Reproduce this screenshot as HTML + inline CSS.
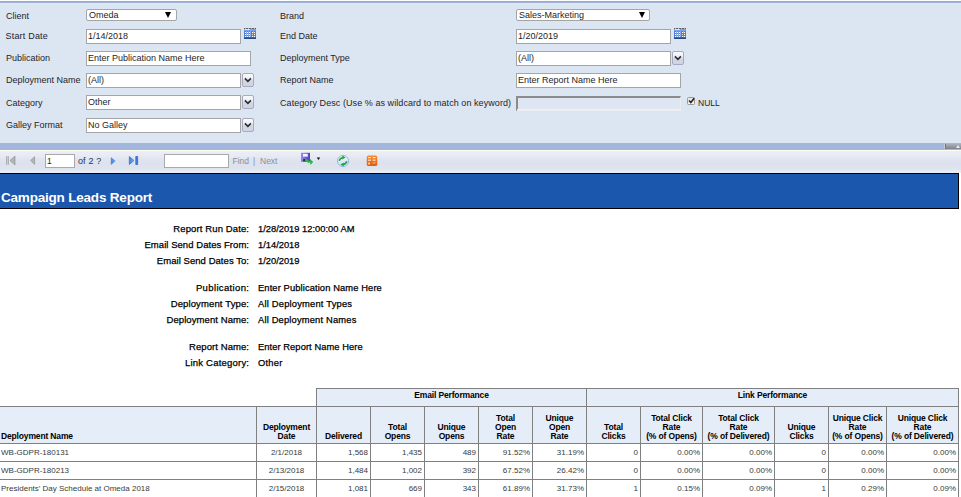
<!DOCTYPE html>
<html><head><meta charset="utf-8">
<style>
html,body{margin:0;padding:0;width:961px;height:497px;overflow:hidden;background:#fff;position:relative}
body{font-family:"Liberation Sans",sans-serif;}
.a{position:absolute}
#params{left:0;top:1px;width:961px;height:142px;background:#dce5f2;border-top:1px solid #aaa8a8;box-sizing:border-box}
#params:before{content:"";position:absolute;left:0;top:0;width:961px;height:1px;background:#9fb3d9;box-shadow:0 1px 0 #e1e9f4}
.lbl{position:absolute;font-size:9px;color:#1e1e2a;white-space:nowrap;line-height:11px}
.box{position:absolute;background:#fff;border:1px solid #a5a5a5;box-sizing:border-box;font-size:9px;color:#1e1e2a;line-height:11px;padding-left:1px;white-space:nowrap;overflow:hidden}
.sel{border-radius:2px;padding-left:2px}
.tri{position:absolute;width:0;height:0;border-left:3px solid transparent;border-right:3px solid transparent;border-top:6px solid #000}
.btn{position:absolute;width:12px;height:14px;box-sizing:border-box;border:1px solid #a7aac0;border-radius:2px;background:linear-gradient(#fbfbfd 0%,#eceef6 40%,#d4d7e6 55%,#cfd3e3 100%)}
.btn svg{position:absolute;left:1.4px;top:3px}
.cal{position:absolute;width:12px;height:11px}
#splitter{left:0;top:143px;width:961px;height:7px;background:#a3b7dd}
#collapse{left:944px;top:144px;width:17px;height:5px;background:linear-gradient(#abb0bb,#7d8491);border-left:1px solid #c3cbd8;box-sizing:border-box}
#toolbar{left:0;top:150px;width:961px;height:23px;background:linear-gradient(to bottom,#fffcf0 0px,#fffcf0 1px,#eceef6 1px,#e8ebf4 6px,#dfe4ef 9px,#dce2ee 14px,#e0e6f0 20px,#e8ecf5 21px,#e8ecf5 23px)}
#hdr{left:0;top:173px;width:959px;height:36px;background:#1c57ae;border:1px solid #000;border-left:none;box-sizing:border-box}
#title{left:1px;top:190px;font-size:13.5px;letter-spacing:-0.2px;font-weight:bold;color:#fff;white-space:nowrap;line-height:16px}
.rl{position:absolute;margin-left:1px;font-size:9.5px;color:#000;-webkit-text-stroke:0.25px #000;white-space:nowrap;line-height:12px;text-align:right;width:200px}
.rv{position:absolute;font-size:9.33px;color:#000;-webkit-text-stroke:0.25px #000;white-space:nowrap;line-height:12px}
table{position:absolute;left:0;top:388px;border-collapse:collapse;table-layout:fixed;font-size:8px}
td{border:1px solid #7f7f7f;padding:0 2px;overflow:hidden;white-space:nowrap;box-sizing:border-box}
td.h{background:#e5edf9;font-weight:bold;color:#000;text-align:center;vertical-align:bottom;line-height:9px;padding-bottom:2px}
td.d{color:#3a3a3a;text-align:right;height:18px}
.th{position:absolute;font-size:8.5px;letter-spacing:-0.15px;font-weight:bold;color:#000;text-align:center;white-space:nowrap;box-sizing:border-box}
.thi{position:absolute;left:0;right:0;bottom:1px;line-height:9px}
.td{position:absolute;font-size:8px;color:#3a3a3a;white-space:nowrap;line-height:17px;height:17px;box-sizing:border-box;overflow:hidden}
</style></head><body>
<div id="params" class="a"></div>

<div class="lbl" style="left:6px;top:10.6px">Client</div>
<div class="lbl" style="left:5.5px;top:31px;letter-spacing:0.2px">Start Date</div>
<div class="lbl" style="left:6px;top:53px">Publication</div>
<div class="lbl" style="left:6px;top:75px">Deployment Name</div>
<div class="lbl" style="left:6px;top:98px">Category</div>
<div class="lbl" style="left:6px;top:120px">Galley Format</div>
<div class="lbl" style="left:280px;top:10.6px">Brand</div>
<div class="lbl" style="left:280px;top:31px">End Date</div>
<div class="lbl" style="left:280px;top:53px">Deployment Type</div>
<div class="lbl" style="left:280px;top:75px">Report Name</div>
<div class="lbl" style="left:280px;top:98px;letter-spacing:0.066px">Category Desc (Use % as wildcard to match on keyword)</div>

<div class="box sel" style="left:86px;top:9px;width:91px;height:12px;line-height:10px">Omeda</div>
<div class="tri" style="left:165px;top:12px"></div>
<div class="box" style="left:86px;top:29px;width:155px;height:15px;line-height:13px">1/14/2018</div>
<svg class="cal" style="left:244px;top:28px" width="12" height="11" viewBox="0 0 12 11" shape-rendering="crispEdges"><rect x="0" y="0" width="12" height="11" fill="#4f80d2"/><rect x="0" y="0" width="12" height="1" fill="#5e5e62"/><rect x="1" y="0" width="1" height="1" fill="#b9b9bd"/><rect x="4" y="0" width="1" height="1" fill="#b9b9bd"/><rect x="7" y="0" width="1" height="1" fill="#b9b9bd"/><rect x="10" y="0" width="1" height="1" fill="#b9b9bd"/><rect x="0" y="1" width="12" height="2" fill="#72a4ee"/><rect x="1" y="1" width="5" height="1" fill="#d8e6fb"/><rect x="2" y="3" width="1" height="6" fill="#86aae6"/><rect x="4" y="3" width="1" height="6" fill="#86aae6"/><rect x="6" y="3" width="1" height="6" fill="#86aae6"/><rect x="9" y="3" width="1" height="6" fill="#86aae6"/><rect x="1" y="4" width="1" height="1" fill="#ffffff"/><rect x="1" y="6" width="1" height="1" fill="#ffffff"/><rect x="1" y="8" width="1" height="1" fill="#ffffff"/><rect x="3" y="4" width="1" height="1" fill="#ffffff"/><rect x="3" y="6" width="1" height="1" fill="#ffffff"/><rect x="3" y="8" width="1" height="1" fill="#ffffff"/><rect x="5" y="4" width="1" height="1" fill="#ffffff"/><rect x="5" y="6" width="1" height="1" fill="#ffffff"/><rect x="5" y="8" width="1" height="1" fill="#ffffff"/><rect x="8" y="4" width="1" height="1" fill="#ffffff"/><rect x="8" y="6" width="1" height="1" fill="#ffffff"/><rect x="8" y="8" width="1" height="1" fill="#ffffff"/><rect x="10" y="4" width="1" height="1" fill="#ffffff"/><rect x="10" y="6" width="1" height="1" fill="#ffffff"/><rect x="10" y="8" width="1" height="1" fill="#ffffff"/><rect x="7" y="5" width="3" height="3" fill="#f0521e"/><rect x="8" y="6" width="1" height="1" fill="#ffd0bc"/><rect x="0" y="9" width="12" height="1" fill="#3a62a8"/><rect x="0" y="10" width="12" height="1" fill="#2a4a86"/></svg>
<div class="box" style="left:86px;top:51px;width:165px;height:15px;line-height:13px">Enter Publication Name Here</div>
<div class="box" style="left:86px;top:73px;width:155px;height:15px;line-height:13px">(All)</div>
<div class="btn" style="left:242px;top:73px"><svg width="8" height="6" viewBox="0 0 8 6"><path d="M0.9 1.4 L3.9 4.3 L6.9 1.4" fill="none" stroke="#2e2e2e" stroke-width="1.7"/></svg></div>
<div class="box" style="left:86px;top:95px;width:155px;height:15px;line-height:13px">Other</div>
<div class="btn" style="left:242px;top:95px"><svg width="8" height="6" viewBox="0 0 8 6"><path d="M0.9 1.4 L3.9 4.3 L6.9 1.4" fill="none" stroke="#2e2e2e" stroke-width="1.7"/></svg></div>
<div class="box" style="left:86px;top:118px;width:155px;height:15px;line-height:13px">No Galley</div>
<div class="btn" style="left:242px;top:118px"><svg width="8" height="6" viewBox="0 0 8 6"><path d="M0.9 1.4 L3.9 4.3 L6.9 1.4" fill="none" stroke="#2e2e2e" stroke-width="1.7"/></svg></div>

<div class="box sel" style="left:516px;top:9px;width:134px;height:12px;line-height:10px">Sales-Marketing</div>
<div class="tri" style="left:639px;top:12px"></div>
<div class="box" style="left:516px;top:29px;width:155px;height:15px;line-height:13px">1/20/2019</div>
<svg class="cal" style="left:674px;top:28px" width="12" height="11" viewBox="0 0 12 11" shape-rendering="crispEdges"><rect x="0" y="0" width="12" height="11" fill="#4f80d2"/><rect x="0" y="0" width="12" height="1" fill="#5e5e62"/><rect x="1" y="0" width="1" height="1" fill="#b9b9bd"/><rect x="4" y="0" width="1" height="1" fill="#b9b9bd"/><rect x="7" y="0" width="1" height="1" fill="#b9b9bd"/><rect x="10" y="0" width="1" height="1" fill="#b9b9bd"/><rect x="0" y="1" width="12" height="2" fill="#72a4ee"/><rect x="1" y="1" width="5" height="1" fill="#d8e6fb"/><rect x="2" y="3" width="1" height="6" fill="#86aae6"/><rect x="4" y="3" width="1" height="6" fill="#86aae6"/><rect x="6" y="3" width="1" height="6" fill="#86aae6"/><rect x="9" y="3" width="1" height="6" fill="#86aae6"/><rect x="1" y="4" width="1" height="1" fill="#ffffff"/><rect x="1" y="6" width="1" height="1" fill="#ffffff"/><rect x="1" y="8" width="1" height="1" fill="#ffffff"/><rect x="3" y="4" width="1" height="1" fill="#ffffff"/><rect x="3" y="6" width="1" height="1" fill="#ffffff"/><rect x="3" y="8" width="1" height="1" fill="#ffffff"/><rect x="5" y="4" width="1" height="1" fill="#ffffff"/><rect x="5" y="6" width="1" height="1" fill="#ffffff"/><rect x="5" y="8" width="1" height="1" fill="#ffffff"/><rect x="8" y="4" width="1" height="1" fill="#ffffff"/><rect x="8" y="6" width="1" height="1" fill="#ffffff"/><rect x="8" y="8" width="1" height="1" fill="#ffffff"/><rect x="10" y="4" width="1" height="1" fill="#ffffff"/><rect x="10" y="6" width="1" height="1" fill="#ffffff"/><rect x="10" y="8" width="1" height="1" fill="#ffffff"/><rect x="7" y="5" width="3" height="3" fill="#f0521e"/><rect x="8" y="6" width="1" height="1" fill="#ffd0bc"/><rect x="0" y="9" width="12" height="1" fill="#3a62a8"/><rect x="0" y="10" width="12" height="1" fill="#2a4a86"/></svg>
<div class="box" style="left:516px;top:51px;width:155px;height:15px;line-height:13px">(All)</div>
<div class="btn" style="left:672px;top:51px"><svg width="8" height="6" viewBox="0 0 8 6"><path d="M0.9 1.4 L3.9 4.3 L6.9 1.4" fill="none" stroke="#2e2e2e" stroke-width="1.7"/></svg></div>
<div class="box" style="left:516px;top:73px;width:165px;height:15px;line-height:13px">Enter Report Name Here</div>
<div class="a" style="left:516px;top:96px;width:165px;height:15px;box-sizing:border-box;border-style:solid;border-width:2px 1px 1px 2px;border-color:#8c8c8c #ececec #ececec #8c8c8c;background:#dde6f2"></div><div class="a" style="left:517px;top:109px;width:164px;height:1px;background:#f0f0f0"></div>
<div class="a" style="left:687px;top:97px;width:8px;height:8px;box-sizing:border-box;background:linear-gradient(#e4e4e4,#f4f4f4);border:1px solid #9a9a9a;border-radius:1.5px"></div><svg class="a" style="left:688px;top:97px" width="7" height="7" viewBox="0 0 7 7"><path d="M1 3.6 L2.8 5.5 L6.2 1.2" fill="none" stroke="#222" stroke-width="1.5"/></svg>
<div class="lbl" style="left:698px;top:98px;font-size:8.5px">NULL</div>

<div id="splitter" class="a"></div>
<div id="collapse" class="a"><div class="a" style="left:0;top:0;width:1px;height:5px;background:#6f7581"></div><div class="a" style="left:11px;top:1px;width:0;height:0;border-left:2.5px solid transparent;border-right:2.5px solid transparent;border-bottom:3px solid #e9edf3"></div></div>
<div id="toolbar" class="a"></div>
<svg class="a" style="left:5px;top:155px" width="12" height="11" viewBox="0 0 12 11"><defs><linearGradient id="gg" x1="0" x2="1"><stop offset="0" stop-color="#9a9a9a"/><stop offset="0.5" stop-color="#d8d8d8"/><stop offset="1" stop-color="#8a8a8a"/></linearGradient></defs><rect x="1" y="1" width="2.6" height="9" rx="0.8" fill="url(#gg)"/><path d="M10 1 L5 5.5 L10 10 Z" fill="#b4b4b4" stroke="#8c8c8c" stroke-width="0.6"/></svg>
<svg class="a" style="left:29px;top:155px" width="8" height="11" viewBox="0 0 8 11"><path d="M5.6 1.6 L1.6 5.5 L5.6 9.4 Z" fill="#b4b4b4" stroke="#8c8c8c" stroke-width="0.6"/></svg>
<div class="box" style="left:45px;top:154px;width:30px;height:14px;font-size:8.5px;line-height:12px;padding-left:1px;color:#3a1a1a;border-color:#a9a9a9">1</div>
<div class="lbl" style="left:78px;top:156px;font-size:9px;color:#33334a;word-spacing:0.4px">of 2 ?</div>
<svg class="a" style="left:109px;top:156px" width="8" height="10" viewBox="0 0 8 10"><defs><linearGradient id="bg1" x1="0" x2="1"><stop offset="0" stop-color="#3d7ee0"/><stop offset="1" stop-color="#7fb0f2"/></linearGradient></defs><path d="M2.2 1.7 L6.2 5 L2.2 8.4 Z" fill="url(#bg1)" stroke="#3a74d6" stroke-width="0.5"/></svg>
<svg class="a" style="left:128px;top:155px" width="12" height="11" viewBox="0 0 12 11"><path d="M1.3 1.5 L6 5.5 L1.3 9.5 Z" fill="url(#bg1)" stroke="#2a63c8" stroke-width="0.6"/><rect x="7.3" y="1" width="2.8" height="9" rx="0.8" fill="#3b78dc"/></svg>
<div class="box" style="left:164px;top:154px;width:65px;height:14px;border-color:#a9a9a9"></div>
<div class="lbl" style="left:232.5px;top:156px;font-size:8.5px;color:#8e8e9c">Find</div>
<div class="lbl" style="left:253px;top:156px;font-size:8.5px;color:#8e8e9c">|</div>
<div class="lbl" style="left:260px;top:156px;font-size:8.5px;color:#8e8e9c">Next</div>
<svg class="a" style="left:300px;top:152px" width="22" height="14" viewBox="0 0 22 14"><defs><linearGradient id="fl" x1="0" x2="1"><stop offset="0" stop-color="#958cf0"/><stop offset="1" stop-color="#4a42b8"/></linearGradient></defs><rect x="1" y="0.8" width="9" height="9.2" fill="url(#fl)"/><rect x="3" y="1.8" width="4.8" height="2.8" fill="#f4f4ff"/><rect x="3.2" y="7.2" width="2" height="2" fill="#1a1a40"/><path d="M5.2 7.6 L9.6 10.4" stroke="#2fb64a" stroke-width="2.2"/><path d="M9.6 6.6 L13.2 10 L10.4 13 Z" fill="#2fb64a"/><path d="M16.8 5.6 L20.2 5.6 L18.5 7.9 Z" fill="#111"/></svg>
<svg class="a" style="left:336px;top:154px" width="14" height="14" viewBox="0 0 14 14"><defs><linearGradient id="rf" x1="0" y1="0" x2="0" y2="1"><stop offset="0" stop-color="#f2f7fd"/><stop offset="1" stop-color="#c9dcf3"/></linearGradient></defs><circle cx="7" cy="7" r="5.6" fill="url(#rf)" stroke="#98bae6" stroke-width="1"/><path d="M3.2 6.8 Q4 4 7 3.5" fill="none" stroke="#1fa83a" stroke-width="1.6"/><path d="M6.3 1.5 L9.6 3.5 L6.3 5.6 Z" fill="#1fa83a"/><path d="M10.8 7.2 Q10 10 7 10.5" fill="none" stroke="#1fa83a" stroke-width="1.6"/><path d="M7.7 8.4 L4.4 10.5 L7.7 12.5 Z" fill="#1fa83a"/></svg>
<svg class="a" style="left:366px;top:155px" width="12" height="12" viewBox="0 0 12 12"><defs><linearGradient id="og" x1="0" y1="0" x2="0" y2="1"><stop offset="0" stop-color="#f88a2a"/><stop offset="1" stop-color="#e65a0e"/></linearGradient></defs><rect x="0.8" y="0.6" width="10.4" height="10.4" rx="1.6" fill="url(#og)"/><g fill="#ffe6d2"><rect x="2" y="2" width="3" height="1.2"/><rect x="6.6" y="2" width="3" height="1.2"/><rect x="2" y="4.6" width="3" height="1.4"/><rect x="6.6" y="4.6" width="3" height="1.4"/><rect x="2.2" y="7.6" width="1.8" height="1.8" rx="0.6"/></g><rect x="6.6" y="7.4" width="3" height="1" fill="#f7b788"/><rect x="0.6" y="5.6" width="10.8" height="0.6" fill="#f07020" opacity="0.6"/></svg>

<div id="hdr" class="a"></div>
<div id="title" class="a">Campaign Leads Report</div>
<div class="rl" style="left:48.12px;top:223px;letter-spacing:0.12px">Report Run Date:</div><div class="rv" style="left:258px;top:223px">1/28/2019 12:00:00 AM</div>
<div class="rl" style="left:48.05px;top:239px;letter-spacing:0.05px">Email Send Dates From:</div><div class="rv" style="left:258px;top:239px">1/14/2018</div>
<div class="rl" style="left:48.05px;top:255px;letter-spacing:0.05px">Email Send Dates To:</div><div class="rv" style="left:258px;top:255px">1/20/2019</div>
<div class="rl" style="left:48.36px;top:282px;letter-spacing:0.36px">Publication:</div><div class="rv" style="left:258px;top:282px;letter-spacing:0.115px">Enter Publication Name Here</div>
<div class="rl" style="left:48.13px;top:298px;letter-spacing:0.13px">Deployment Type:</div><div class="rv" style="left:258px;top:298px;letter-spacing:0.21px">All Deployment Types</div>
<div class="rl" style="left:48.08px;top:314px;letter-spacing:0.08px">Deployment Name:</div><div class="rv" style="left:258px;top:314px;letter-spacing:0.18px">All Deployment Names</div>
<div class="rl" style="left:48.07px;top:341px;letter-spacing:0.07px">Report Name:</div><div class="rv" style="left:258px;top:341px;letter-spacing:0.07px">Enter Report Name Here</div>
<div class="rl" style="left:48.21px;top:357px;letter-spacing:0.21px">Link Category:</div><div class="rv" style="left:258px;top:357px;letter-spacing:0.25px">Other</div>
<div class="a" style="left:317px;top:389px;width:641px;height:17px;background:#e5edf9"></div>
<div class="a" style="left:0px;top:407px;width:958px;height:36px;background:#e5edf9"></div>
<div class="a" style="left:316px;top:388px;width:643px;height:1px;background:#808080"></div>
<div class="a" style="left:316px;top:388px;width:1px;height:18px;background:#808080"></div>
<div class="a" style="left:586px;top:388px;width:1px;height:18px;background:#808080"></div>
<div class="a" style="left:958px;top:388px;width:1px;height:18px;background:#808080"></div>
<div class="a" style="left:0px;top:406px;width:959px;height:1px;background:#808080"></div>
<div class="a" style="left:0px;top:443px;width:959px;height:1px;background:#808080"></div>
<div class="a" style="left:0px;top:461px;width:959px;height:1px;background:#808080"></div>
<div class="a" style="left:0px;top:479px;width:959px;height:1px;background:#808080"></div>
<div class="a" style="left:256px;top:406px;width:1px;height:91px;background:#808080"></div>
<div class="a" style="left:316px;top:406px;width:1px;height:91px;background:#808080"></div>
<div class="a" style="left:370px;top:406px;width:1px;height:91px;background:#808080"></div>
<div class="a" style="left:424px;top:406px;width:1px;height:91px;background:#808080"></div>
<div class="a" style="left:478px;top:406px;width:1px;height:91px;background:#808080"></div>
<div class="a" style="left:532px;top:406px;width:1px;height:91px;background:#808080"></div>
<div class="a" style="left:586px;top:406px;width:1px;height:91px;background:#808080"></div>
<div class="a" style="left:640px;top:406px;width:1px;height:91px;background:#808080"></div>
<div class="a" style="left:702px;top:406px;width:1px;height:91px;background:#808080"></div>
<div class="a" style="left:774px;top:406px;width:1px;height:91px;background:#808080"></div>
<div class="a" style="left:828px;top:406px;width:1px;height:91px;background:#808080"></div>
<div class="a" style="left:886px;top:406px;width:1px;height:91px;background:#808080"></div>
<div class="a" style="left:958px;top:406px;width:1px;height:91px;background:#808080"></div>
<div class="th" style="left:317px;top:390px;width:269px;line-height:10px">Email Performance</div>
<div class="th" style="left:587px;top:390px;width:371px;line-height:10px">Link Performance</div>
<div class="th" style="left:1px;top:407px;width:255px;height:35px;text-align:left;padding-left:0px"><div class="thi">Deployment Name</div></div>
<div class="th" style="left:257px;top:407px;width:59px;height:35px;text-align:center"><div class="thi">Deployment<br>Date</div></div>
<div class="th" style="left:317px;top:407px;width:53px;height:35px;text-align:center"><div class="thi">Delivered</div></div>
<div class="th" style="left:371px;top:407px;width:53px;height:35px;text-align:center"><div class="thi">Total<br>Opens</div></div>
<div class="th" style="left:425px;top:407px;width:53px;height:35px;text-align:center"><div class="thi">Unique<br>Opens</div></div>
<div class="th" style="left:479px;top:407px;width:53px;height:35px;text-align:center"><div class="thi">Total<br>Open<br>Rate</div></div>
<div class="th" style="left:533px;top:407px;width:53px;height:35px;text-align:center"><div class="thi">Unique<br>Open<br>Rate</div></div>
<div class="th" style="left:587px;top:407px;width:53px;height:35px;text-align:center"><div class="thi">Total<br>Clicks</div></div>
<div class="th" style="left:641px;top:407px;width:61px;height:35px;text-align:center"><div class="thi">Total Click<br>Rate<br>(% of Opens)</div></div>
<div class="th" style="left:703px;top:407px;width:71px;height:35px;text-align:center"><div class="thi">Total Click<br>Rate<br>(% of Delivered)</div></div>
<div class="th" style="left:775px;top:407px;width:53px;height:35px;text-align:center"><div class="thi">Unique<br>Clicks</div></div>
<div class="th" style="left:829px;top:407px;width:57px;height:35px;text-align:center"><div class="thi">Unique Click<br>Rate<br>(% of Opens)</div></div>
<div class="th" style="left:887px;top:407px;width:71px;height:35px;text-align:center"><div class="thi">Unique Click<br>Rate<br>(% of Delivered)</div></div>
<div class="td" style="left:1px;top:444px;width:255px;text-align:left;padding-left:0px">WB-GDPR-180131</div>
<div class="td" style="left:257px;top:444px;width:59px;text-align:center">2/1/2018</div>
<div class="td" style="left:317px;top:444px;width:53px;text-align:right;padding-right:2px">1,568</div>
<div class="td" style="left:371px;top:444px;width:53px;text-align:right;padding-right:2px">1,435</div>
<div class="td" style="left:425px;top:444px;width:53px;text-align:right;padding-right:2px">489</div>
<div class="td" style="left:479px;top:444px;width:53px;text-align:right;padding-right:2px">91.52%</div>
<div class="td" style="left:533px;top:444px;width:53px;text-align:right;padding-right:2px">31.19%</div>
<div class="td" style="left:587px;top:444px;width:53px;text-align:right;padding-right:2px">0</div>
<div class="td" style="left:641px;top:444px;width:61px;text-align:right;padding-right:2px">0.00%</div>
<div class="td" style="left:703px;top:444px;width:71px;text-align:right;padding-right:2px">0.00%</div>
<div class="td" style="left:775px;top:444px;width:53px;text-align:right;padding-right:2px">0</div>
<div class="td" style="left:829px;top:444px;width:57px;text-align:right;padding-right:2px">0.00%</div>
<div class="td" style="left:887px;top:444px;width:71px;text-align:right;padding-right:2px">0.00%</div>
<div class="td" style="left:1px;top:462px;width:255px;text-align:left;padding-left:0px">WB-GDPR-180213</div>
<div class="td" style="left:257px;top:462px;width:59px;text-align:center">2/13/2018</div>
<div class="td" style="left:317px;top:462px;width:53px;text-align:right;padding-right:2px">1,484</div>
<div class="td" style="left:371px;top:462px;width:53px;text-align:right;padding-right:2px">1,002</div>
<div class="td" style="left:425px;top:462px;width:53px;text-align:right;padding-right:2px">392</div>
<div class="td" style="left:479px;top:462px;width:53px;text-align:right;padding-right:2px">67.52%</div>
<div class="td" style="left:533px;top:462px;width:53px;text-align:right;padding-right:2px">26.42%</div>
<div class="td" style="left:587px;top:462px;width:53px;text-align:right;padding-right:2px">0</div>
<div class="td" style="left:641px;top:462px;width:61px;text-align:right;padding-right:2px">0.00%</div>
<div class="td" style="left:703px;top:462px;width:71px;text-align:right;padding-right:2px">0.00%</div>
<div class="td" style="left:775px;top:462px;width:53px;text-align:right;padding-right:2px">0</div>
<div class="td" style="left:829px;top:462px;width:57px;text-align:right;padding-right:2px">0.00%</div>
<div class="td" style="left:887px;top:462px;width:71px;text-align:right;padding-right:2px">0.00%</div>
<div class="td" style="left:1px;top:480px;width:255px;text-align:left;padding-left:0px">Presidents' Day Schedule at Omeda 2018</div>
<div class="td" style="left:257px;top:480px;width:59px;text-align:center">2/15/2018</div>
<div class="td" style="left:317px;top:480px;width:53px;text-align:right;padding-right:2px">1,081</div>
<div class="td" style="left:371px;top:480px;width:53px;text-align:right;padding-right:2px">669</div>
<div class="td" style="left:425px;top:480px;width:53px;text-align:right;padding-right:2px">343</div>
<div class="td" style="left:479px;top:480px;width:53px;text-align:right;padding-right:2px">61.89%</div>
<div class="td" style="left:533px;top:480px;width:53px;text-align:right;padding-right:2px">31.73%</div>
<div class="td" style="left:587px;top:480px;width:53px;text-align:right;padding-right:2px">1</div>
<div class="td" style="left:641px;top:480px;width:61px;text-align:right;padding-right:2px">0.15%</div>
<div class="td" style="left:703px;top:480px;width:71px;text-align:right;padding-right:2px">0.09%</div>
<div class="td" style="left:775px;top:480px;width:53px;text-align:right;padding-right:2px">1</div>
<div class="td" style="left:829px;top:480px;width:57px;text-align:right;padding-right:2px">0.29%</div>
<div class="td" style="left:887px;top:480px;width:71px;text-align:right;padding-right:2px">0.09%</div>
</body></html>
